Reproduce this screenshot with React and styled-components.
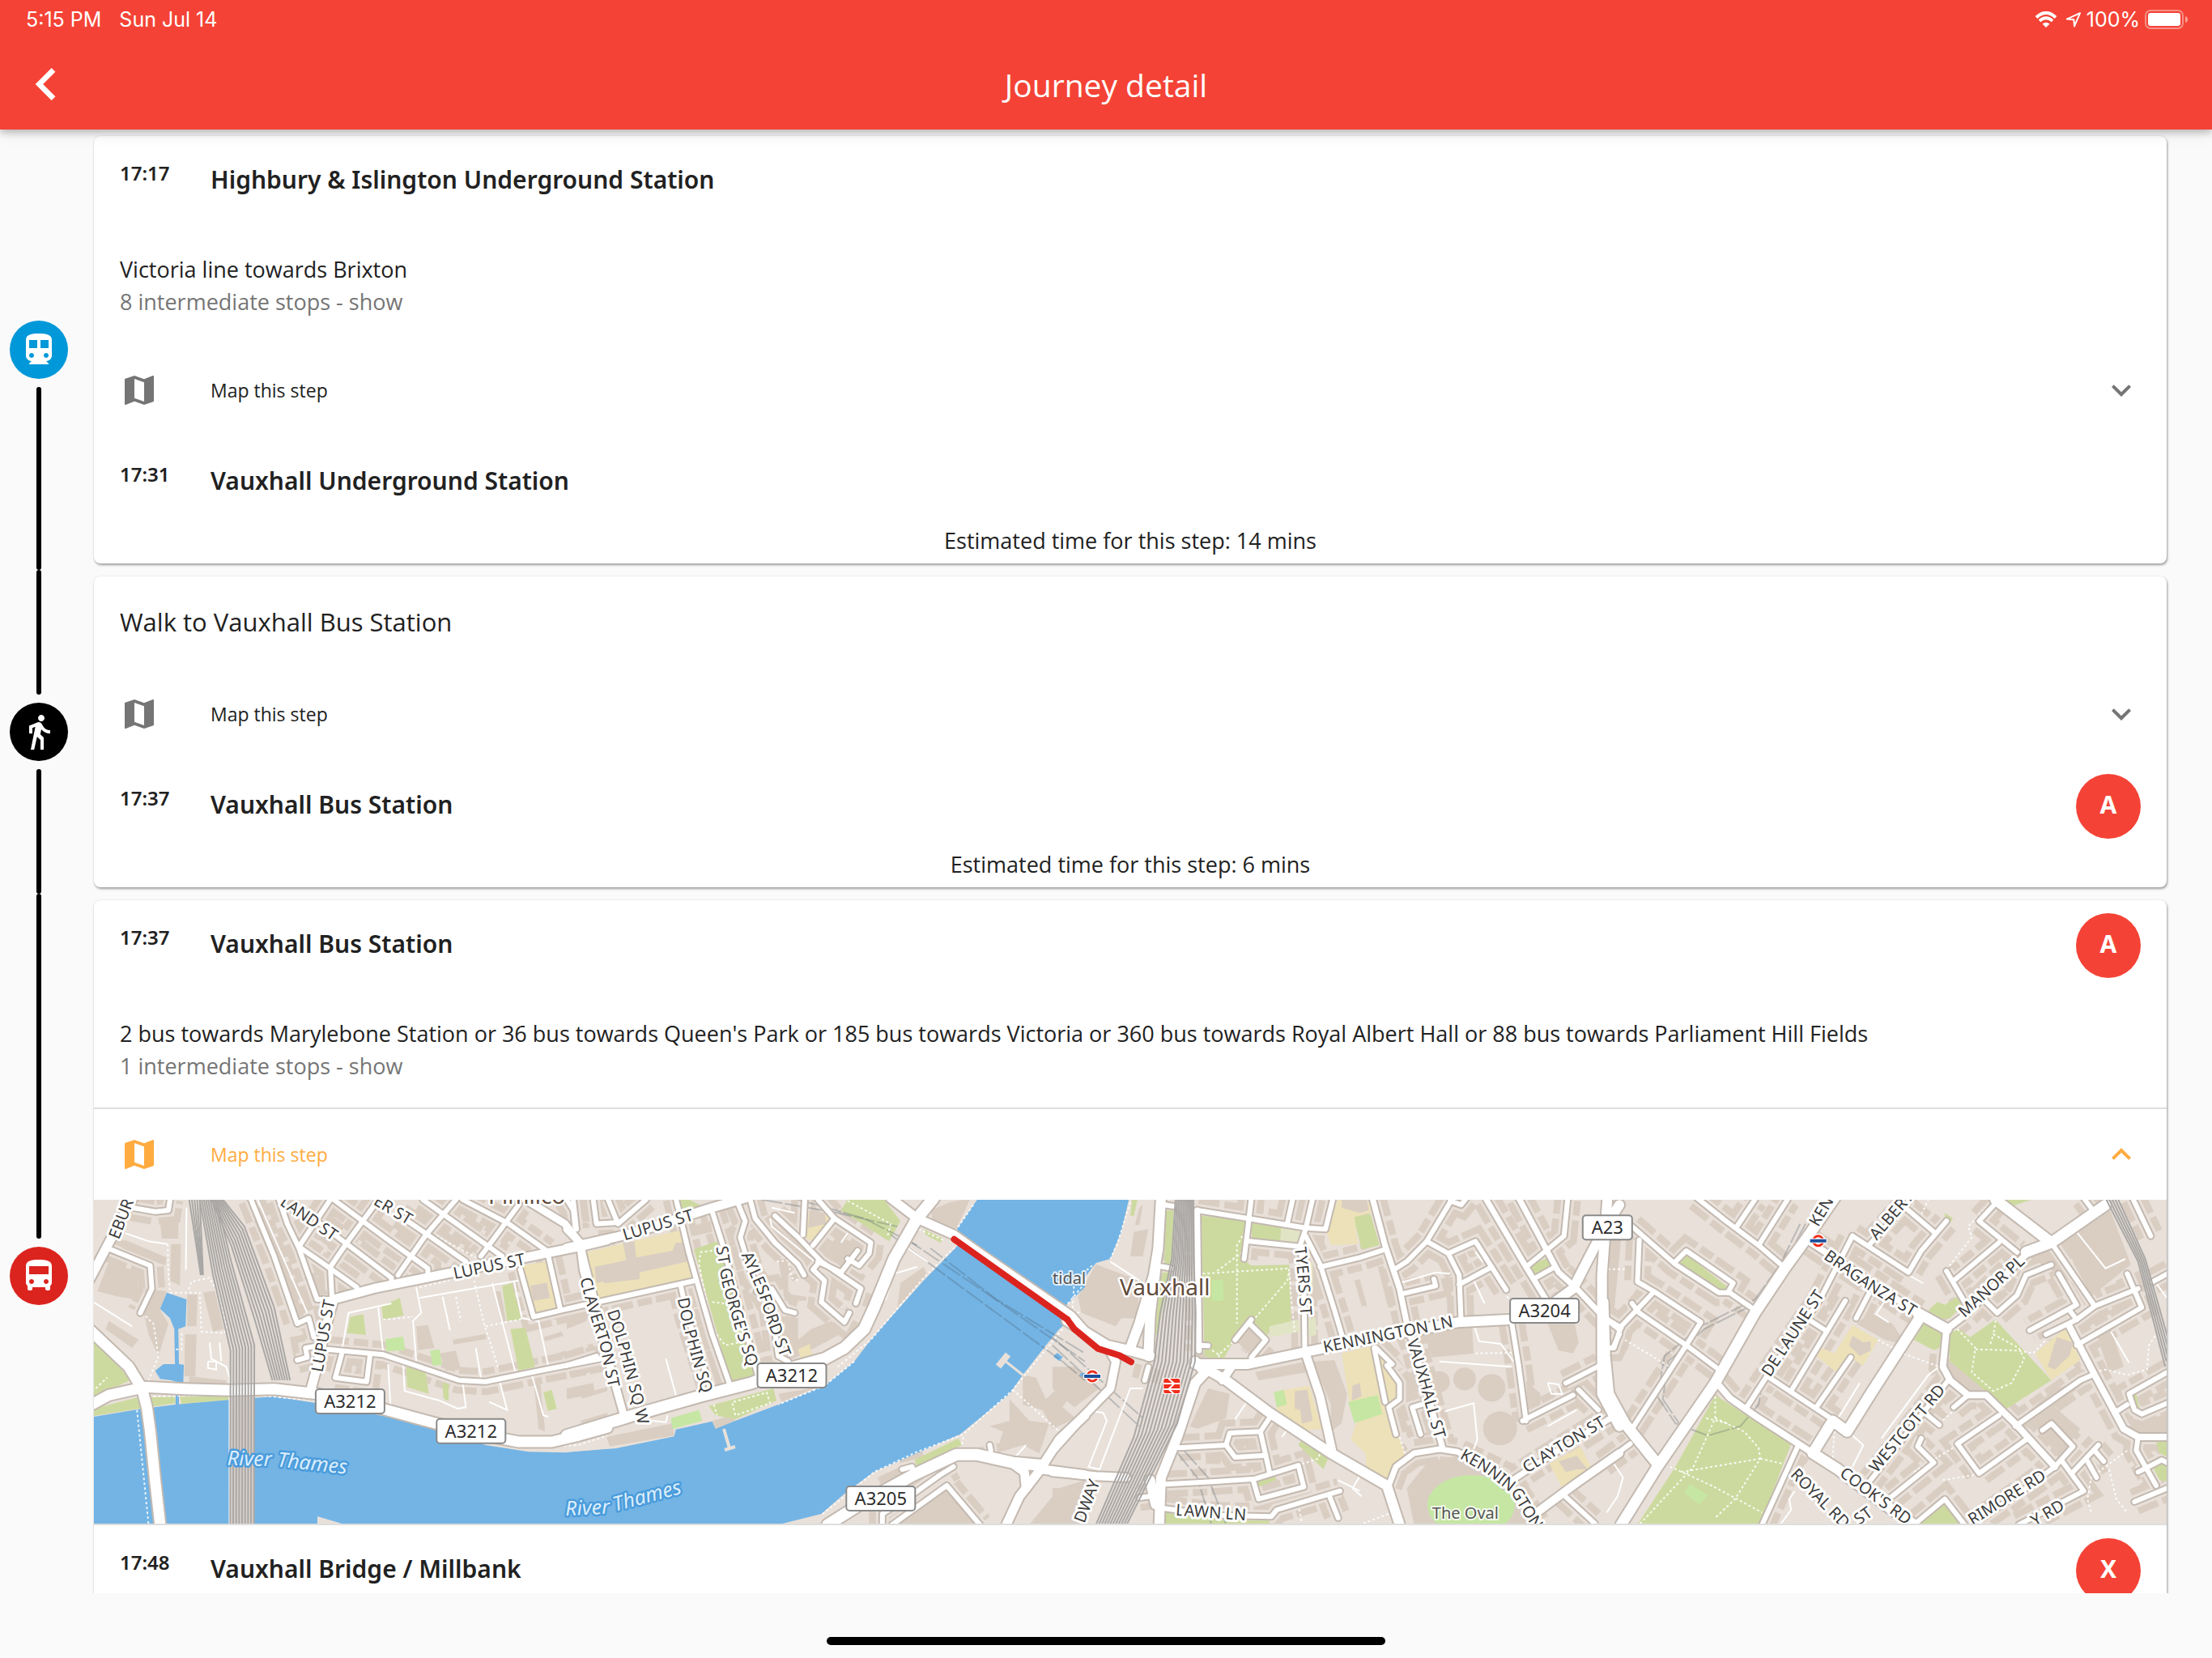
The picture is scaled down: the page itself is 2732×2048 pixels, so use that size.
import React from "react";
import styled, { createGlobalStyle } from "styled-components";
import {
  MdChevronLeft,
  MdDirectionsBus,
  MdDirectionsSubway,
  MdDirectionsWalk,
  MdExpandLess,
  MdExpandMore,
  MdMap,
} from "react-icons/md";

const steps = [
  {
    id: "victoria",
    mode: "subway",
    from: { time: "17:17", name: "Highbury & Islington Underground Station" },
    summary: "Victoria line towards Brixton",
    stops: "8 intermediate stops - show",
    to: { time: "17:31", name: "Vauxhall Underground Station" },
    estimate: "14 mins",
  },
  {
    id: "walk",
    mode: "walk",
    title: "Walk to Vauxhall Bus Station",
    to: { time: "17:37", name: "Vauxhall Bus Station", stop: "A" },
    estimate: "6 mins",
  },
  {
    id: "bus",
    mode: "bus",
    open: true,
    from: { time: "17:37", name: "Vauxhall Bus Station", stop: "A" },
    summary:
      "2 bus towards Marylebone Station or 36 bus towards Queen's Park or 185 bus towards Victoria or 360 bus towards Royal Albert Hall or 88 bus towards Parliament Hill Fields",
    stops: "1 intermediate stops - show",
    to: { time: "17:48", name: "Vauxhall Bridge / Millbank", stop: "X" },
    estimate: "11 mins",
  },
];

const modes = {
  subway: { color: "#0098d8", Icon: MdDirectionsSubway },
  walk: { color: "#000000", Icon: MdDirectionsWalk },
  bus: { color: "#dc241f", Icon: MdDirectionsBus },
};

export default function App() {
  return (
    <Page>
      <GlobalStyle />
      <Header>
        <StatusBar>
          <StatusGroup $gap={22}>
            <span>5:15 PM</span>
            <span>Sun Jul 14</span>
          </StatusGroup>
          <StatusGroup $gap={6}>
            <WifiIcon />
            <LocationIcon />
            <span>100%</span>
            <BatteryIcon />
          </StatusGroup>
        </StatusBar>
        <AppBar>
          <BackButton aria-label="Back">
            <MdChevronLeft />
          </BackButton>
          <Title>Journey detail</Title>
        </AppBar>
      </Header>
      <StepList>
        {steps.map((step, i) => (
          <Step
            key={step.id}
            step={step}
            first={i === 0}
            last={i === steps.length - 1}
          />
        ))}
      </StepList>
      <Footer>
        <HomeBar />
      </Footer>
    </Page>
  );
}

const Step = ({ step, first, last }) => {
  const [open, setOpen] = React.useState(Boolean(step.open));
  const { color, Icon } = modes[step.mode];

  return (
    <StepRow>
      <Rail>
        <RailLine $hidden={first} />
        <RailIcon $color={color}>
          <Icon />
        </RailIcon>
        <RailLine $hidden={last} />
      </Rail>
      <Card>
        {step.from && <Place place={step.from} />}
        {step.title && <WalkTitle>{step.title}</WalkTitle>}
        {step.summary && (
          <Summary>
            <p>{step.summary}</p>
            <StopsButton>{step.stops}</StopsButton>
          </Summary>
        )}
        <MapPanel $open={open}>
          <MapToggle
            $open={open}
            aria-expanded={open}
            onClick={() => setOpen(!open)}
          >
            <MdMap />
            <span>Map this step</span>
            {open ? <MdExpandLess /> : <MdExpandMore />}
          </MapToggle>
          {open && <StepMap />}
        </MapPanel>
        <Place place={step.to} />
        <Estimate>Estimated time for this step: {step.estimate}</Estimate>
      </Card>
    </StepRow>
  );
};

const Place = ({ place }) => (
  <PlaceRow>
    <Time>{place.time}</Time>
    <PlaceName>{place.name}</PlaceName>
    {place.stop && <StopBadge>{place.stop}</StopBadge>}
  </PlaceRow>
);

const WifiIcon = () => (
  <svg width="32" height="20" viewBox="0 0 32 20" fill="none">
    <path d="M2 7.500Q14-3.500 26 7.500" stroke="#fff" strokeWidth="4" />
    <path d="M6 11.800Q14 4.600 22 11.800" stroke="#fff" strokeWidth="3.800" />
    <path d="M14 20l-4.500-4.600q4.500-3.400 9 0z" fill="#fff" />
  </svg>
);

const LocationIcon = () => (
  <svg width="20" height="20" viewBox="0 0 20 20" fill="none">
    <path
      d="M18 2.200L1.800 9.600l8.600.6.600 8.200z"
      stroke="#fff"
      strokeWidth="2"
      strokeLinejoin="round"
    />
  </svg>
);

const BatteryIcon = () => (
  <svg width="54" height="24" viewBox="0 0 54 24" fill="none">
    <rect
      x="1"
      y="1"
      width="46"
      height="22"
      rx="6"
      stroke="#fff"
      strokeOpacity="0.4"
      strokeWidth="2"
    />
    <rect x="4" y="4" width="40" height="16" rx="3" fill="#fff" />
    <path d="M50 8q3 1 3 4t-3 4z" fill="#fff" fillOpacity="0.5" />
  </svg>
);

/* ---------- map ---------- */

// The map is stored as four sheets, each with its own grid.
// [left edge, grid units per map unit across]; all share 3 units per map unit down.
const sheets = {
  a: [-6, 2.45],
  b: [584, 2.45],
  c: [1184, 2.24],
  d: [1864, 2.24],
};

const project = (sheet, pts) =>
  pts.split(" ").map((pair) => {
    const [x, y] = pair.split(",").map(Number);
    const [left, scale] = sheets[sheet];
    return [Math.round((left + x / scale) * 10) / 10, Math.round((y / 3 - 7) * 10) / 10];
  });

const toPath = (points) => "M" + points.map((p) => p.join(" ")).join("L");

const flatten = (layer) =>
  Object.entries(layer).flatMap(([sheet, list]) =>
    list.map((item) => toPath(project(sheet, item)))
  );

const flattenRoads = (layer) =>
  Object.entries(layer).flatMap(([sheet, widths]) =>
    Object.entries(widths).flatMap(([width, list]) =>
      list.map((item) => ({ w: Number(width), d: toPath(project(sheet, item)) }))
    )
  );

const water = flatten({
  a: [
    "0,828 150,797 260,780 425,762 560,750 690,775 850,812 1000,850 1200,930 1330,955 1450,958 1568,945 1568,1230 0,1230",
    "235,365 295,390 292,490 270,500 272,630 287,632 285,705 250,690 215,685 200,655 225,630 260,630 258,500 245,460 215,425",
    "262,700 272,700 272,780 262,780",
  ],
  b: [
    "0,957 150,942 325,898 330,872 440,842 450,870 510,840 640,780 780,710 870,620 920,540 1080,320 1180,195 1180,130 1245,15 1480,15 1568,15 1568,345 1500,425 1520,470 1490,500 1450,560 1380,670 1340,740 1280,800 1190,890 1060,960 930,1030 850,1100 770,1185 640,1225 0,1225",
    "1485,588 1500,605 1490,618 1474,603",
  ],
  c: [
    "0,15 212,15 190,140 160,240 120,255 100,290 40,400 10,440 0,440",
    "10,590 28,602 20,618 3,602",
    "75,665 90,662 90,678 78,675",
  ],
});

const parks = flatten({
  a: [
    "0,520 60,590 125,690 60,725 0,760",
    "0,800 140,755 260,750 262,775 150,795 0,825",
    "275,750 425,750 425,762 280,778",
    "790,455 830,445 838,522 780,515",
    "885,415 940,385 952,450 890,465",
    "1250,340 1280,330 1308,465 1265,470",
    "1275,500 1320,495 1350,640 1300,655",
    "960,640 1018,655 1028,740 962,715",
    "1070,697 1088,705 1088,768 1072,755",
    "1375,735 1400,725 1415,795 1388,803",
  ],
  b: [
    "385,205 455,175 575,690 500,715",
    "340,20 370,20 410,45 350,60",
    "430,785 625,720 635,765 510,835 450,820",
    "850,20 960,20 1010,100 975,175 830,60",
    "1052,985 1185,905 1195,930 1060,1010",
    "1080,130 1140,165 1130,180 1085,150",
  ],
  c: [
    "412,80 535,100 530,245 550,265 655,262 660,470 600,500 590,540 545,475 500,545 470,620 420,600",
    "550,105 632,122 630,180 552,168",
    "310,60 335,60 330,260 310,260",
    "305,290 325,290 290,520 255,530",
    "832,82 880,75 905,190 855,205",
    "1315,270 1370,235 1385,265 1325,305",
    "690,910 765,970 750,1020 680,930",
    "563,1055 615,1035 618,1060 570,1085",
    "312,1180 480,1210 600,1210 600,1225 312,1225",
    "220,20 235,20 225,80 215,80",
  ],
  d: [
    "310,745 520,925 435,1225 95,1225 200,1010",
    "1015,530 1085,465 1240,690 1110,800 1060,745 1050,720 960,620 950,520 985,500",
    "900,430 925,400 945,410 985,375 1000,400 960,460 920,465",
    "860,540 890,475 945,510 930,570 915,578",
    "215,235 235,228 350,350 320,360 210,260",
    "865,1225 945,1140 985,1225",
    "1455,735 1475,740 1485,800 1465,790",
    "1530,920 1568,905 1568,980 1540,960",
    "1110,20 1185,20 1130,45",
    "1520,1010 1558,995 1560,1065 1540,1060",
    "945,70 968,90 960,108 945,90",
  ],
});

const meadows = flatten({
  c: [
    "632,122 700,130 685,185 630,180",
    "600,490 680,465 685,510 600,530",
    "700,255 720,255 720,350 705,350",
    "705,465 728,455 730,520 710,530",
  ],
});

const pitches = flatten({
  a: ["897,538 950,528 957,578 900,583", "1032,580 1060,575 1068,632 1040,636"],
  b: ["315,830 400,800 410,840 320,870"],
  c: [
    "440,320 472,317 473,395 442,395",
    "818,770 900,745 912,815 835,848",
    "612,735 640,725 648,780 620,790",
  ],
  d: ["240,1075 290,1115 265,1150 225,1105"],
});

const schools = flatten({
  a: [
    "1312,265 1385,250 1415,425 1345,440",
    "1505,230 1568,205 1568,400 1545,405",
  ],
  b: [
    "60,215 340,135 385,310 105,400",
    "735,60 800,80 760,190 715,155",
    "700,575 735,555 745,610 710,620",
  ],
  c: [
    "790,20 880,30 880,70 835,85 845,185 770,190 755,130",
    "800,590 890,560 950,700 955,760 920,770 975,960 920,1065 870,1030 865,960 825,910 840,850 820,760",
    "620,730 710,710 745,870 700,875 620,800",
    "1375,1000 1460,935 1490,1010 1410,1090",
  ],
  d: [
    "690,485 760,540 720,635 690,610 645,660 590,600 605,570 640,590",
    "1195,590 1280,495 1320,615 1240,690",
  ],
});

const buildings = flatten({
  a: [
    "60,250 150,290 145,390 90,380 25,360",
    "170,350 235,360 215,430 240,480 210,600 180,520 165,440",
    "215,95 270,80 270,165 220,165",
    "248,185 278,185 275,340 245,320",
    "110,170 235,235 230,265 100,200",
    "297,373 328,373 325,490 297,490",
    "290,520 325,520 322,675 288,675",
    "345,365 380,358 408,500 375,510",
    "303,675 415,690 415,710 303,700",
    "60,470 150,540 130,570 50,500",
    "520,30 560,150 650,450 630,460 500,100",
    "650,310 680,290 725,370 690,380",
    "1400,465 1568,420 1568,440 1480,470",
    "1375,530 1430,510 1435,525 1380,545",
    "1395,600 1440,580 1445,595 1400,615",
    "1488,840 1568,810 1568,830 1490,860",
    "1490,740 1568,715 1568,730 1492,758",
    "1345,690 1365,690 1380,880 1360,870",
    "1100,540 1200,518 1203,537 1103,557",
    "990,490 1025,485 1045,570 995,578",
    "1060,590 1110,580 1125,650 1080,655",
    "1230,360 1245,360 1262,470 1245,470",
  ],
  b: [
    "1380,670 1420,680 1450,760 1500,700 1540,720 1500,790 1540,830 1470,870 1440,800 1380,780",
    "1340,760 1400,840 1460,850 1430,960 1380,930 1300,960 1320,880 1280,860 1340,840",
    "1000,1225 1150,1095 1240,1225",
    "1490,1090 1568,1060 1568,1225 1400,1225",
    "940,1050 1010,1010 1010,1040 950,1075",
    "120,900 320,850 325,895 130,935",
    "440,840 500,820 510,840 480,870 450,870",
    "640,740 760,715 650,770",
    "1100,60 1160,30 1200,20 1220,20 1170,150 1110,110",
    "820,150 880,190 830,270 780,220",
    "620,90 650,90 760,230 740,250",
    "660,450 700,460 700,540 740,500 800,470 840,510 720,590 665,620",
    "640,240 670,240 670,370 725,380 725,395 660,395",
    "370,120 435,100 440,140 385,155",
    "0,470 60,440 60,470 0,500",
    "0,720 80,700 85,740 0,760",
    "1010,330 1080,270 1090,300 1000,420",
  ],
  c: [
    "70,380 120,260 240,320 235,460 190,460 175,490 80,440",
    "240,50 250,40 240,115 228,115",
    "225,140 265,130 250,230 215,230",
    "1025,510 1160,480 1165,590 1050,605",
    "1370,480 1440,450 1455,550 1440,590 1400,580",
    "425,960 465,955 465,1000 425,1000",
    "560,660 700,620 705,660 570,690",
    "380,860 430,720 490,740 480,830 400,870",
    "720,620 780,615 815,740 800,850 770,880 770,780",
    "0,640 60,640 130,720 60,790 0,720",
    "0,1090 60,1090 40,1225 0,1225",
    "1310,690 1350,740 1350,780 1315,800",
    "1000,1225 980,1090 1040,990 1120,970 1210,1010 1290,1100 1320,1225",
    "505,540 545,490 590,540 550,600",
    "835,320 850,315 870,415 855,415",
    "900,270 915,265 942,420 928,420",
  ],
  d: [
    "20,160 50,160 30,440 0,450",
    "1150,210 1230,200 1330,400 1300,330",
    "1270,170 1400,50 1460,260 1350,380",
    "1140,850 1250,720 1340,690 1180,870",
    "950,600 1050,715 1050,740 1000,735 945,650",
    "740,440 800,480 840,560 780,540 700,480",
    "1185,830 1250,790 1320,870 1260,980",
    "1450,860 1568,810 1568,890 1480,895",
    "860,790 920,740 950,760 900,840",
    "1360,500 1400,480 1440,640 1400,660",
  ],
});

const schoolBlocks = flatten({
  a: ["1335,340 1385,328 1395,385 1345,395", "1530,270 1568,260 1568,320 1535,330"],
  b: [
    "85,270 180,245 170,180 205,175 210,235 320,210 330,180 350,180 365,250 220,290 220,315 115,330",
    "735,60 780,70 785,110 730,125",
  ],
  c: [
    "670,730 705,725 720,840 690,850 685,800 670,795",
    "1400,990 1450,970 1480,1020 1450,1020 1420,1030",
    "800,20 870,20 875,60 850,70 800,50",
    "830,710 850,700 855,750 828,765",
  ],
  d: [
    "690,525 720,550 740,545 740,580 710,600 680,560",
    "1255,530 1300,550 1290,600 1250,650 1230,640 1245,570",
  ],
});

const roads = flattenRoads({
  a: {
    14: [
      "0,785 60,745 170,715 290,722 430,727 560,722 690,740 870,790 1050,850 1180,890 1300,918 1400,918 1480,895 1568,865",
      "0,500 60,570 120,640 160,720 175,790 185,880 200,1060 215,1225",
    ],
    12: [
      "0,320 60,180 130,20",
      "670,730 690,640 715,500 740,390 860,350 1100,290 1340,230 1500,190 1568,170",
    ],
    10: ["1320,20 1440,110 1485,180 1500,260 1530,400 1568,540"],
    7: [
      "575,20 600,110 635,200 690,390 740,390",
      "490,20 560,230 630,480 665,460 680,530",
      "730,20 635,195",
      "870,30 780,180 730,270 735,380",
      "1110,20 1020,150 935,300",
      "1300,40 1210,190 1185,230",
      "635,195 700,250 810,345",
      "700,110 780,185 915,310 915,325",
      "740,20 900,165 1025,275 1025,300",
      "940,80 1030,155 1140,250",
      "1010,20 1250,230",
      "1130,20 1270,110 1385,210",
      "1465,20 1475,130",
      "65,205 185,265 190,350 155,440",
      "130,50 200,65 240,60 245,20",
      "720,575 890,595 1000,640 1120,690 1200,695 1380,650 1568,605",
      "765,590 745,680 840,695 850,600",
      "1305,280 1345,455 1500,410",
      "1390,230 1425,420",
      "630,615 660,605 655,570 700,560",
    ],
  },
  b: {
    15: [
      "1110,15 1060,90 990,240 930,420 900,500 840,570 780,610 660,650 560,700 400,750 200,820 0,895",
      "790,1225 900,1140 1050,1040 1180,965 1240,965 1350,995 1440,1005",
    ],
    12: [
      "980,15 1060,90 1170,150 1250,220 1525,450 1568,510",
      "0,200 200,145 440,50 540,15",
      "1440,1005 1490,910 1568,820",
      "1440,1010 1370,1120 1330,1225",
      "1440,1020 1568,1040",
      "1340,990 1385,1030 1390,1090",
    ],
    10: ["0,130 40,180 50,280 100,500 175,830"],
    7: [
      "330,15 370,220 400,350 440,520 500,730",
      "435,45 470,180 530,450 580,680",
      "0,425 390,320",
      "345,340 365,450 440,740",
      "0,635 90,600",
      "520,40 540,100 525,160 560,300 620,420 640,600 670,620",
      "555,20 570,90 630,180 700,260 718,300",
      "630,80 700,160 770,250 890,350 875,405",
      "720,20 715,150",
      "760,20 810,90 745,190",
      "810,90 920,180 915,220 885,265 850,240",
      "760,250 830,290 880,210",
      "765,250 745,280 780,320 770,400 840,475 855,440",
      "575,360 620,350 660,430 690,440",
      "80,20 90,110 155,105",
      "125,20 155,110 240,20",
      "0,20 20,60 25,120",
      "955,1225 955,1185 1050,1110 1130,1040 1170,1010",
      "985,1225 1150,1080 1250,1225",
      "1015,1020 1045,1010 1050,1040",
      "1280,930 1283,950",
    ],
  },
  c: {
    13: [
      "300,15 292,200 280,300 240,480 215,570",
      "285,280 270,450 265,600",
      "40,470 150,560 215,580 270,600",
      "395,630 540,630 700,585 880,535 1120,475 1260,465",
      "1568,40 1530,120 1490,220 1440,350 1390,400",
      "1535,15 1530,120 1520,300 1520,740 1568,860",
      "415,640 480,690 600,810 770,960 925,1080 960,1225",
      "430,650 395,700 345,900 300,1050 295,1225",
      "270,1060 285,1150",
      "395,620 415,650",
    ],
    11: [
      "700,590 740,750 775,960",
      "470,690 495,640",
      "0,1030 120,1045 205,1050",
      "0,950 80,830 160,720 175,620 155,575",
      "1340,1180 1440,1080 1568,960",
    ],
    8: [
      "885,15 920,190 960,350 985,510 1000,560 1080,945",
      "930,1080 950,1010 1000,960 1070,945 1120,955 1250,1040 1340,1220",
      "1200,20 1310,270 1365,390",
      "1290,15 1360,190 1400,290 1450,350 1520,450 1568,500",
      "1250,1080 1340,1000 1568,810",
      "400,60 405,580",
    ],
    7: [
      "400,60 540,90 700,125 755,130 775,20",
      "310,40 335,45",
      "300,268 330,275",
      "550,15 540,130 530,240",
      "665,15 650,105",
      "720,15 700,130 685,190 695,300 698,590",
      "545,175 690,195",
      "700,155 740,260 780,430 800,520",
      "740,270 850,235 920,205",
      "1100,30 1035,175 980,250 945,280",
      "1035,175 1095,220 1170,175 1255,355",
      "1095,220 1125,300 1130,465",
      "1125,335 1215,270",
      "965,370 1060,340 1055,315",
      "1310,270 1415,155 1425,20",
      "1330,315 1390,270",
      "1100,25 1130,40 1145,15",
      "350,940 480,930 490,885 575,880 605,820",
      "480,930 505,975 590,968",
      "575,880 600,1030",
      "315,1075 450,1065 560,1055 680,1005 695,1085 570,1130 555,1060",
      "310,1165 450,1190 605,1195 620,1170 795,1100",
      "765,1115 790,1200",
      "265,640 255,690",
      "895,570 940,630 925,635 960,700 960,760 930,790 950,890",
      "890,570 920,770",
      "1020,780 995,790 1018,890",
      "1270,475 1290,640 1310,840",
      "1300,840 1440,745",
      "1420,700 1515,635",
      "1455,725 1510,800",
      "1530,570 1550,570 1568,520",
      "1410,1110 1500,1220",
      "545,480 590,540 550,605",
      "505,540 550,465",
      "405,560 430,562",
      "240,1125 270,1120",
    ],
  },
  d: {
    14: [
      "640,15 570,150 500,280 420,440 310,700 150,1010 50,1225",
      "0,400 5,600 15,740 60,850 150,1000",
      "580,960 650,1020 800,1170 860,1225",
      "580,960 635,840 675,880 740,740 880,450",
      "870,440 950,500",
      "1170,215 1240,180 1390,40",
      "1085,20 1240,180",
    ],
    9: [
      "575,180 870,440",
      "950,500 1000,450 1180,210",
      "315,700 350,755 430,830 540,925 580,960",
      "950,500 940,640 960,690 1010,745 1060,745 1140,850 1250,1010",
      "1290,490 1360,670 1440,870 1480,900 1568,900",
    ],
    7: [
      "260,15 340,100 430,190 500,270",
      "430,190 510,20",
      "370,120 420,20",
      "80,120 200,260 320,365 350,365 420,430",
      "200,250 230,210 360,330 345,365",
      "100,170 95,325 140,360 270,475 230,560 75,880",
      "80,405 100,440 230,560 320,650",
      "135,370 50,490 30,570 0,570",
      "0,455 50,495",
      "640,840 460,680",
      "395,795 460,660 600,390 690,155",
      "690,155 845,290 880,210 950,100",
      "735,190 850,20",
      "840,55 915,140",
      "1085,35 1040,100 1145,215",
      "1095,180 975,315",
      "950,285 1000,400",
      "1245,190 1360,415 1480,350",
      "1360,415 1310,465 1225,520",
      "1310,465 1290,430",
      "1260,295 1310,410 1180,505",
      "1310,560 1490,420 1450,295",
      "1090,440 1145,375 1170,300 1240,262",
      "1060,400 1090,440",
      "970,790 1010,745",
      "955,690 740,1060",
      "1140,860 1320,690 1355,670",
      "1095,820 980,925 1040,1035 1170,910",
      "1215,875 1240,850 1300,935 1250,1010 1180,1080 1050,1200",
      "1270,990 1330,1100 1150,1225",
      "1300,1030 1370,930",
      "1340,990 1365,1050",
      "1360,950 1385,990",
      "880,905 870,935 915,995 790,1130",
      "520,730 670,395",
      "590,790 685,605",
      "700,460 735,370",
      "575,470 615,505",
      "930,855 880,800",
      "540,930 440,1225",
      "0,1000 75,925",
      "860,1225 945,1130 1000,1225",
      "1415,810 1450,780",
      "1568,655 1455,740 1470,800 1490,815 1568,770",
      "1480,900 1475,950 1530,1080",
      "1480,1030 1545,985 1568,1000",
      "1470,1140 1560,1090",
      "1465,15 1515,155",
      "1520,325 1568,290",
      "1330,15 1355,60",
    ],
  },
});

const lanes = flatten({
  a: [
    "0,390 130,490",
    "110,145 180,175 238,185",
    "765,580 785,440 915,405",
    "875,420 890,590",
    "905,630 912,780",
    "950,620 955,730 1060,765 1115,795 1140,790 1130,690",
    "1000,385 1300,320",
    "990,345 1005,440 980,470 990,620",
    "1220,330 1290,660",
    "1285,320 1310,460 1360,470 1390,640",
    "1340,670 1375,820 1390,825",
    "1240,680 1265,800 1210,770",
    "295,50 293,280",
    "1070,380 1092,505",
    "1170,570 1187,690",
    "365,550 370,610 415,640 425,680 425,1225",
    "510,20 660,440",
    "395,550 400,620",
    "360,620 385,620 385,650 360,645 360,620",
  ],
  b: [
    "300,610 337,775",
    "620,50 690,70",
    "830,180 850,145",
    "1020,190 1090,250",
    "1060,270 990,295 965,390 950,400",
    "258,840 300,845 305,820",
    "615,90 620,120 750,250",
    "1360,970 1390,930",
  ],
  c: [
    "960,330 1060,290 1100,295",
    "1165,480 1180,545 1240,555 1275,620",
    "1070,620 1270,640",
    "1085,805 1165,775 1175,910 1165,945",
    "505,835 540,765",
    "635,900 650,870",
    "850,1045 830,1090 855,1120",
    "1370,700 1400,705 1410,740 1380,740 1370,700",
    "1370,860 1450,800",
    "1165,320 1195,405",
    "80,800 140,810 150,840 100,1010 130,1020 215,720 250,720",
    "160,250 240,320",
    "1170,215 1190,250",
    "790,1060 850,1100",
  ],
  d: [
    "930,640 900,670 770,905",
    "1310,140 1390,275 1445,240",
    "1405,510 1455,625",
    "710,700 650,830",
    "690,895 720,930 690,1010",
    "780,395 755,445 790,475",
    "530,1100 515,1130 520,1170 490,1225",
    "1530,330 1568,400",
    "845,300 885,330",
    "30,1000 55,1050 40,1120 10,1180",
  ],
});

const paths = flatten({
  a: [
    "238,185 240,295 245,365 335,365 340,510 410,515 415,490 390,370 365,310 310,325 300,360",
    "160,440 195,480 210,600 180,690",
    "1165,320 1195,480 1240,650",
    "1200,490 1340,455",
    "280,515 280,575 255,575",
    "145,800 180,1225",
    "190,790 225,1225",
    "180,750 420,745",
    "500,745 690,765",
    "1050,155 1170,235",
    "1110,380 1125,470",
    "1305,940 1480,930 1568,895",
    "1000,345 1090,320",
    "20,720 55,680",
    "890,465 980,455",
  ],
  b: [
    "440,210 405,215 400,260 440,500 480,560 520,550",
    "440,400 475,405",
    "505,770 605,735 615,775 510,820 500,770",
    "445,780 455,820",
    "1230,40 1180,130 1180,190 1080,310 920,540 820,640",
    "870,620 780,710 640,780",
    "1568,330 1500,430",
    "1500,500 1350,725 1200,890 1060,955 930,1030 770,1190",
    "1350,725 1490,880",
    "635,250 670,245 680,310 700,320",
    "850,25 980,110 970,160",
    "1200,900 1195,930",
    "1065,130 1140,170",
  ],
  c: [
    "215,30 180,180 160,240",
    "525,155 510,190 510,480",
    "415,295 655,275 650,320 560,460",
    "525,215 450,290",
    "655,290 660,380 670,510",
    "430,570 460,595 505,540",
    "460,595 460,610",
    "110,265 60,320 55,430 75,440",
    "960,900 975,965",
    "690,1000 735,980 740,960",
    "860,1220 930,1185",
    "680,1150 690,1220",
    "1170,590 1270,588",
    "1255,360 1260,390",
  ],
  d: [
    "310,750 310,830 250,1010 100,1225",
    "310,830 390,880 430,940 435,980 365,1130 310,1200",
    "435,980 215,1030",
    "435,980 500,1000",
    "185,1010 300,1080 440,1180",
    "285,830 345,850",
    "980,500 1030,570 1020,660 1080,730 1130,700 1165,610 1150,570 1080,520 1070,560",
    "1030,575 1150,580 1190,590 1225,540",
    "1088,450 1080,520",
    "760,540 830,590 930,640",
    "60,540 185,640",
    "0,278 60,278",
    "950,280 1020,160 1010,120 1060,50",
    "875,90 900,20",
    "1360,660 1390,650 1450,670 1505,650 1510,560 1530,520",
    "640,860 635,990",
    "1400,1020 1420,1130 1450,1180",
    "1450,950 1350,1050 1340,1130 1350,1180",
    "860,1030 980,930",
    "930,850 980,790",
    "940,1060 1030,1040",
  ],
});

const underground = flatten({
  b: [
    "590,20 820,70 1000,120",
    "980,150 1200,350 1500,620 1568,690",
    "1020,160 1250,350 1568,620",
    "1100,200 1300,390 1568,590",
    "700,20 900,90 1060,190",
  ],
  c: ["0,530 250,830", "0,560 240,860", "340,950 400,1050 440,1225", "360,945 430,1050 480,1225"],
  d: [
    "545,110 490,260 420,390 270,490 170,600 150,750 200,850 290,895 380,860 430,780 445,660",
    "560,110 500,260 430,400 280,500 180,620 165,760 210,850",
  ],
});

// Tracks that run side by side are fanned out between two outer tracks.
const fan = (sheet, count, left, right) => {
  const from = project(sheet, left);
  const to = project(sheet, right);
  return Array.from({ length: count }, (_, i) =>
    toPath(
      from.map(([x, y], n) => {
        const t = i / (count - 1);
        return [x + (to[n][0] - x) * t, y + (to[n][1] - y) * t];
      })
    )
  );
};

const tracks = [
  ...fan("a", 5, "303,20 338,300", "335,20 345,300"),
  ...fan("a", 9, "335,20 375,300 428,580 427,1225", "385,20 430,250 500,560 499,1225"),
  ...fan("a", 8, "370,20 430,190 500,460 555,690", "405,20 470,120 560,420 608,690"),
  ...fan(
    "c",
    12,
    "340,20 330,240 298,440 282,620 225,900 120,1225",
    "390,20 390,240 396,440 394,620 345,850 205,1225"
  ),
  ...fan("d", 5, "1392,20 1480,250 1555,640", "1425,20 1500,240 1568,560"),
];

const route = flatten({
  b: ["1172,167 1515,465"],
  c: ["41,465 60,500 125,572 185,598 217,622"],
});

const streets = [
  ["a", "EBUR", "90,170 138,20"],
  ["a", "LAND ST", "575,38 720,160"],
  ["a", "ER ST", "858,36 955,108"],
  ["a", "LUPUS ST", "706,662 722,560 735,450 752,350"],
  ["a", "LUPUS ST", "1106,315 1330,258"],
  ["b", "CLAVERTON ST", "40,314 60,410 100,560 130,738"],
  ["b", "DOLPHIN SQ W", "122,436 150,540 185,700 210,825"],
  ["b", "DOLPHIN SQ", "335,388 350,480 385,640 405,720"],
  ["b", "ST GEORGE'S SQ", "452,196 470,330 510,500 545,630"],
  ["b", "AYLESFORD ST", "528,225 580,370 615,500 645,600"],
  ["b", "LUPUS ST", "175,172 395,92"],
  ["c", "TYERS ST", "670,198 678,300 685,430"],
  ["c", "KENNINGTON LN", "752,588 1122,488"],
  ["c", "VAUXHALL ST", "980,544 1010,680 1055,893"],
  ["c", "KENNINGTON OVAL", "1125,978 1200,1035 1270,1110 1310,1200 1340,1260"],
  ["c", "CLAYTON ST", "1312,1035 1525,862"],
  ["c", "LAWN LN", "340,1190 525,1208"],
  ["c", "DWAY", "88,1222 132,1065"],
  ["d", "KEN", "595,124 645,10"],
  ["d", "ALBERT", "757,173 855,20"],
  ["d", "BRAGANZA ST", "608,238 720,345 850,450"],
  ["d", "MANOR PL", "1000,460 1180,240"],
  ["d", "DE LAUNE ST", "462,680 610,380"],
  ["d", "WESTCOTT RD", "757,1035 940,740"],
  ["d", "ROYAL RD", "516,1042 655,1230"],
  ["d", "COOK'S RD", "652,1042 740,1130 850,1240"],
  ["d", "ST", "708,1228 753,1185"],
  ["d", "RIMORE RD", "1022,1228 1215,1065"],
  ["d", "Y RD", "1195,1232 1280,1165"],
];

const rivers = [
  ["a", "River Thames", "418,1004 560,1008 800,1040"],
  ["a", "River Thames", "1442,1192 1568,1184 1820,1100"],
];

const shields = [
  ["a", "A3212", 790, 768, 85],
  ["a", "A3212", 1156, 878, 85],
  ["b", "A3212", 681, 672, 85],
  ["b", "A3205", 950, 1128, 85],
  ["c", "A3204", 1361, 432, 85],
  ["c", "A23", 1535, 124, 61],
];

const Label = ({ id, sheet, text, pts }) => {
  const points = project(sheet, pts);
  const [[x1, y1], [x2, y2]] = points.slice(-2);
  const len = Math.hypot(x2 - x1, y2 - y1);
  // run the baseline on a little so the last letters are never dropped
  points.push([x2 + ((x2 - x1) / len) * 60, y2 + ((y2 - y1) / len) * 60]);
  return (
    <>
      <defs>
        <path id={id} d={toPath(points)} />
      </defs>
      <text>
        <textPath href={"#" + id}>{text}</textPath>
      </text>
    </>
  );
};

const Roundel = ({ sheet, at }) => {
  const [[x, y]] = project(sheet, at);
  return (
    <g>
      <circle cx={x} cy={y} r="9" fill="#fff" />
      <circle cx={x} cy={y} r="6" fill="none" stroke="#ee2e1c" strokeWidth="3" />
      <rect x={x - 11} y={y - 3} width="22" height="6" fill="#fff" />
      <rect x={x - 10} y={y - 2} width="20" height="4" fill="#1c4f9c" />
    </g>
  );
};

const Shape = ({ list, ...rest }) => (
  <g {...rest}>
    {list.map((d, i) => (
      <path key={i} d={d} />
    ))}
  </g>
);

const StepMap = () => {
  const minor = roads.filter((road) => road.w < 10);
  const [[vx, vy]] = project("c", "186,375");
  const [[tx, ty]] = project("c", "0,333");
  const [[px, py]] = project("a", "1208,36");
  const [[ox, oy]] = project("c", "1050,1203");
  const [[rx, ry]] = project("c", "330,711");
  const [[gx, gy]] = project("c", "1158,1152");

  return (
    <MapCanvas viewBox="0 0 2560 400" preserveAspectRatio="xMidYMid slice">
      <rect width="2560" height="400" fill="#e8e0d9" />

      <g fill="none" stroke="#dacec3" strokeDasharray="26 6 18 5">
        {minor.map((road, i) => (
          <path key={i} d={road.d} strokeWidth={road.w + 26} />
        ))}
      </g>
      <g fill="none" stroke="#e8e0d9">
        {minor.map((road, i) => (
          <path key={i} d={road.d} strokeWidth={road.w + 9} />
        ))}
      </g>
      <Shape list={buildings} fill="#dacec3" />
      <Shape list={parks} fill="#cdda9f" />
      <Shape list={meadows} fill="#e2e4c6" />
      <Shape list={schools} fill="#ece1b8" />
      <Shape list={pitches} fill="#c6e6a3" />
      <Shape list={schoolBlocks} fill="#dacec3" />
      <ellipse cx={gx} cy={gy} rx="54" ry="37" fill="#c6e6a3" />
      {["1070,695,13", "1140,685,14", "1215,718,17", "1238,868,21"].map((c) => {
        const [x, y, r] = c.split(",");
        const [[cx, cy]] = project("c", x + "," + y);
        return <circle key={c} cx={cx} cy={cy} r={r} fill="#dacec3" />;
      })}
      <Shape list={water} fill="#73b4e5" />
      <path d="M276 391l40 12h-40z" fill="#e8e0d9" />
      <g stroke="#e8e0d9" fill="none">
        <path d="M778 283l7 24m-6 2l13-4" strokeWidth="4" />
        <path d="M1124 198l24 19" strokeWidth="3" />
        <path d="M1117 206l12-15" strokeWidth="8" />
      </g>
      <path d="M167 232h31v170h-31z" fill="#d8cfc9" />

      <Shape
        list={underground}
        fill="none"
        stroke="#50606c"
        strokeOpacity="0.3"
        strokeWidth="2"
        strokeDasharray="26 3"
      />
      <Shape list={lanes} fill="none" stroke="#ffffff" strokeWidth="2" />
      <Shape
        list={paths}
        fill="none"
        stroke="#ffffff"
        strokeOpacity="0.85"
        strokeWidth="2"
        strokeDasharray="3 3"
      />
      <g fill="none" stroke="#c3b9b0" strokeLinecap="round" strokeLinejoin="round">
        {roads.map((road, i) => (
          <path key={i} d={road.d} strokeWidth={road.w + 3} />
        ))}
      </g>
      <g fill="none" stroke="#ffffff" strokeLinecap="round" strokeLinejoin="round">
        {roads.map((road, i) => (
          <path key={i} d={road.d} strokeWidth={road.w - 1} />
        ))}
      </g>
      <Shape list={tracks} fill="none" stroke="#aaa8a6" strokeWidth="2" />
      <Shape
        list={route}
        fill="none"
        stroke="#dc241f"
        strokeWidth="8"
        strokeLinecap="round"
        strokeLinejoin="round"
      />

      <StreetNames>
        {streets.map(([sheet, text, pts], i) => (
          <Label key={i} id={"street" + i} sheet={sheet} text={text} pts={pts} />
        ))}
      </StreetNames>
      <RiverNames>
        {rivers.map(([sheet, text, pts], i) => (
          <Label key={i} id={"river" + i} sheet={sheet} text={text} pts={pts} />
        ))}
      </RiverNames>
      <AreaNames>
        <text x={vx} y={vy}>
          Vauxhall
        </text>
        <text x={px} y={py}>
          Pimlico
        </text>
      </AreaNames>
      <SpotNames>
        <text x={tx} y={ty}>
          tidal
        </text>
        <text x={ox} y={oy}>
          The Oval
        </text>
      </SpotNames>
      {shields.map(([sheet, text, cx, cy, w], i) => {
        const [[x, y]] = project(sheet, cx + "," + cy);
        return (
          <Shield key={i}>
            <rect x={x - w / 2} y={y - 15} width={w} height="30" rx="4" />
            <text x={x} y={y + 8}>
              {text}
            </text>
          </Shield>
        );
      })}
      <Roundel sheet="c" at="110,675" />
      <Roundel sheet="d" at="595,173" />
      <rect x={rx - 11} y={ry - 10} width="22" height="20" rx="2" fill="#fff" />
      <rect x={rx - 10} y={ry - 9} width="20" height="18" rx="2" fill="#ee2e1c" />
      <path
        d={`M${rx - 10} ${ry - 3}h20M${rx - 10} ${ry + 4}h20M${rx - 4} ${ry - 9}l7 6l-7 7l6 5`}
        fill="none"
        stroke="#fff"
        strokeWidth="2"
      />
    </MapCanvas>
  );
};

/* ---------- styles ---------- */

const GlobalStyle = createGlobalStyle`
  * {
    box-sizing: border-box;
  }

  body {
    margin: 0;
    background: #fafafa;
    color: #212121;
    font-family: "Open Sans", "Noto Sans", sans-serif;
    font-size: 27px;
  }

  p,
  h1,
  h2 {
    margin: 0;
  }

  button {
    border: 0;
    padding: 0;
    background: none;
    color: inherit;
    font: inherit;
    text-align: left;
    cursor: pointer;
  }

  svg {
    display: block;
  }
`;

const Page = styled.div`
  display: flex;
  flex-direction: column;
  height: 100vh;
  overflow: hidden;
`;

const Header = styled.header`
  position: relative;
  z-index: 1;
  background: #f44336;
  color: #ffffff;
  box-shadow: 0 4px 8px rgba(0, 0, 0, 0.2), 0 2px 20px rgba(0, 0, 0, 0.12);
`;

const StatusBar = styled.div`
  display: flex;
  justify-content: space-between;
  height: 48px;
  padding: 0 29px 0 32px;
  font-family: Inter, "Liberation Sans", sans-serif;
  font-size: 25px;
`;

const StatusGroup = styled.div`
  display: flex;
  align-items: center;
  gap: ${(props) => props.$gap}px;
`;

const AppBar = styled.div`
  display: grid;
  grid-template-columns: 112px 1fr 112px;
  align-items: center;
  height: 112px;
`;

const BackButton = styled.button`
  padding-left: 17px;

  & svg {
    width: 80px;
    height: 80px;
  }
`;

const Title = styled.h1`
  font-size: 39px;
  font-weight: 400;
  text-align: center;
`;

const StepList = styled.main`
  flex: 1;
  min-height: 0;
  overflow: hidden;
`;

const StepRow = styled.section`
  display: flex;
  padding-right: 56px;
`;

const Rail = styled.div`
  display: flex;
  flex-direction: column;
  align-items: center;
  gap: 10px;
  width: 72px;
  margin: 0 32px 0 12px;
`;

const RailLine = styled.div`
  flex: 1;
  width: 6px;
  border-radius: 3px;
  background: ${(props) => (props.$hidden ? "transparent" : "#000000")};
`;

const RailIcon = styled.div`
  display: flex;
  align-items: center;
  justify-content: center;
  width: 72px;
  height: 72px;
  border-radius: 50%;
  background: ${(props) => props.$color};
  color: #ffffff;

  & svg {
    width: 48px;
    height: 48px;
  }
`;

const Card = styled.article`
  flex: 1;
  min-width: 0;
  margin: 8px 0;
  border-radius: 8px;
  background: #ffffff;
  box-shadow: 1px 2px 3px rgba(0, 0, 0, 0.36), 0 0 2px rgba(0, 0, 0, 0.12);
`;

const PlaceRow = styled.div`
  display: flex;
  align-items: flex-start;
  height: 112px;
  padding: 16px 32px;
  font-family: "Noto Sans", "Open Sans", sans-serif;
`;

const Time = styled.time`
  width: 112px;
  padding-top: 12px;
  font-size: 24px;
  font-weight: 600;
  line-height: 36px;
`;

const PlaceName = styled.h2`
  flex: 1;
  padding-top: 18px;
  font-size: 30px;
  font-weight: 600;
  line-height: 40px;
`;

const StopBadge = styled.span`
  width: 80px;
  height: 80px;
  border-radius: 50%;
  background: #f44336;
  color: #ffffff;
  font-size: 30px;
  font-weight: 700;
  line-height: 76px;
  text-align: center;
`;

const WalkTitle = styled.h2`
  height: 112px;
  padding: 0 32px;
  font-size: 31px;
  font-weight: 400;
  line-height: 112px;
`;

const Summary = styled.div`
  height: 144px;
  padding: 33px 32px;
  line-height: 40px;
`;

const StopsButton = styled.button`
  display: block;
  color: #757575;
`;

const MapPanel = styled.div`
  border-top: 2px solid ${(props) => (props.$open ? "#dedede" : "transparent")};
  border-bottom: 2px solid ${(props) => (props.$open ? "#dedede" : "transparent")};
`;

const MapToggle = styled.button`
  display: grid;
  grid-template-columns: 112px 1fr 48px;
  align-items: center;
  width: 100%;
  height: 112px;
  padding: 0 32px;
  color: ${(props) => (props.$open ? "#ffab40" : "#212121")};
  font-size: 23px;

  & svg {
    width: 48px;
    height: 48px;
    color: ${(props) => (props.$open ? "#ffab40" : "#757575")};
  }
`;

const Estimate = styled.p`
  height: 44px;
  line-height: 32px;
  text-align: center;
`;

const MapCanvas = styled.svg`
  width: 100%;
  height: 400px;
  font-family: "Noto Sans", "Open Sans", sans-serif;
`;

const StreetNames = styled.g`
  fill: #3c3c3c;
  stroke: #ffffff;
  stroke-width: 6px;
  stroke-linejoin: round;
  paint-order: stroke;
  font-size: 20px;
`;

const RiverNames = styled.g`
  fill: #dceefb;
  stroke: #4b9cdc;
  stroke-width: 5px;
  stroke-linejoin: round;
  paint-order: stroke;
  font-size: 25px;
  font-style: italic;
`;

const AreaNames = styled.g`
  fill: #5f4a3a;
  stroke: #ffffff;
  stroke-width: 5px;
  stroke-linejoin: round;
  paint-order: stroke;
  font-size: 28px;
`;

const SpotNames = styled.g`
  fill: #555555;
  stroke: #ffffff;
  stroke-opacity: 0.8;
  stroke-width: 4px;
  stroke-linejoin: round;
  paint-order: stroke;
  font-size: 20px;
`;

const Shield = styled.g`
  & rect {
    fill: #ffffff;
    stroke: #8a8a8a;
    stroke-width: 2px;
  }

  & text {
    fill: #2c2c2c;
    font-size: 22px;
    text-anchor: middle;
  }
`;

const Footer = styled.footer`
  display: flex;
  justify-content: center;
  height: 80px;
  padding-top: 54px;
`;

const HomeBar = styled.div`
  width: 690px;
  height: 10px;
  border-radius: 5px;
  background: #000000;
`;
